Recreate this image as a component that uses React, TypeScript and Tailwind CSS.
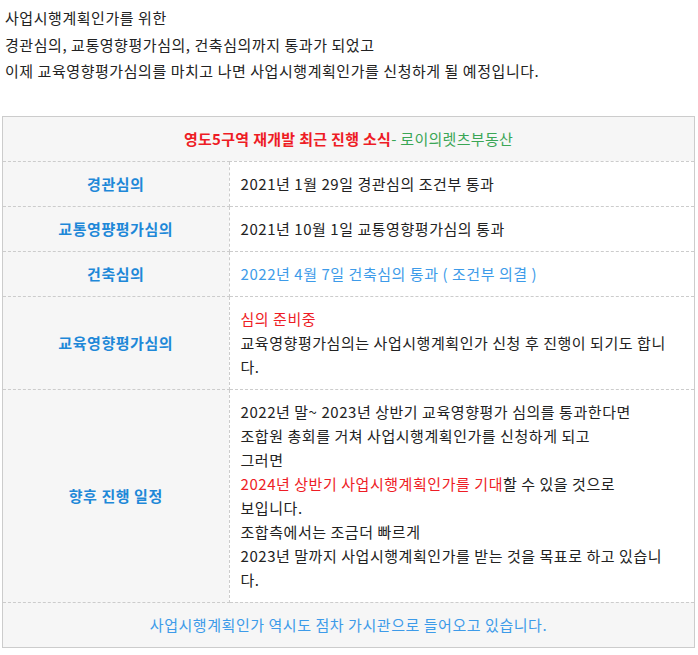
import React from "react";

const font = { fontFamily: '"Noto Sans CJK KR", "Noto Sans", sans-serif' };

function Row({ label, children }: { label: string; children: React.ReactNode }) {
  return (
    <tr>
      <td className="w-[226px] bg-[#f6f6f6] border-b border-dashed border-[#cccccc] border-r text-center font-bold text-[#1e88d8] py-[10px] align-middle">
        {label}
      </td>
      <td className="border-b border-dashed border-[#cccccc] pl-[11px] pr-[24px] py-[10px] text-[#222222] align-middle">
        {children}
      </td>
    </tr>
  );
}

export default function App() {
  return (
    <div className="bg-white w-[698px] h-[655px] text-[15px] tracking-[0.55px] text-[#222222]" style={font}>
      <div className="pl-[5px] pt-[5px] leading-[26.5px]">
        <p>사업시행계획인가를 위한</p>
        <p>경관심의, 교통영향평가심의, 건축심의까지 통과가 되었고</p>
        <p>이제 교육영향평가심의를 마치고 나면 사업시행계획인가를 신청하게 될 예정입니다.</p>
      </div>
      <div className="mt-[31px] ml-[2px] w-[693px] border border-[#cccccc]">
        <table className="w-full border-collapse leading-[24px]">
          <tbody>
            <tr>
              <td colSpan={2} className="bg-[#f6f6f6] border-b border-dashed border-[#cccccc] text-center py-[10px] tracking-[0.3px]">
                <span className="font-bold text-[#ee1c25]">영도5구역 재개발 최근 진행 소식</span>
                <span className="text-[#3aa655]">- 로이의렛츠부동산</span>
              </td>
            </tr>
            <Row label="경관심의">2021년 1월 29일 경관심의 조건부 통과</Row>
            <Row label="교통영퍙평가심의">2021년 10월 1일 교통영향평가심의 통과</Row>
            <Row label="건축심의">
              <span className="text-[#3d9be9]">2022년 4월 7일 건축심의 통과 ( 조건부 의결 )</span>
            </Row>
            <Row label="교육영향평가심의">
              <div className="text-[#ee1c25]">심의 준비중</div>
              <div>교육영향평가심의는 사업시행계획인가 신청 후 진행이 되기도 합니다.</div>
            </Row>
            <Row label="향후 진행 일정">
              <div>2022년 말~ 2023년 상반기 교육영향평가 심의를 통과한다면</div>
              <div>조합원 총회를 거쳐 사업시행계획인가를 신청하게 되고</div>
              <div>그러면</div>
              <div>
                <span className="text-[#ee1c25]">2024년 상반기 사업시행계획인가를 기대</span>할 수 있을 것으로
              </div>
              <div>보입니다.</div>
              <div>조합측에서는 조금더 빠르게</div>
              <div>2023년 말까지 사업시행계획인가를 받는 것을 목표로 하고 있습니다.</div>
            </Row>
            <tr>
              <td colSpan={2} className="bg-[#f6f6f6] text-center py-[10px] text-[#3d9be9]">
                사업시행계획인가 역시도 점차 가시관으로 들어오고 있습니다.
              </td>
            </tr>
          </tbody>
        </table>
      </div>
    </div>
  );
}
